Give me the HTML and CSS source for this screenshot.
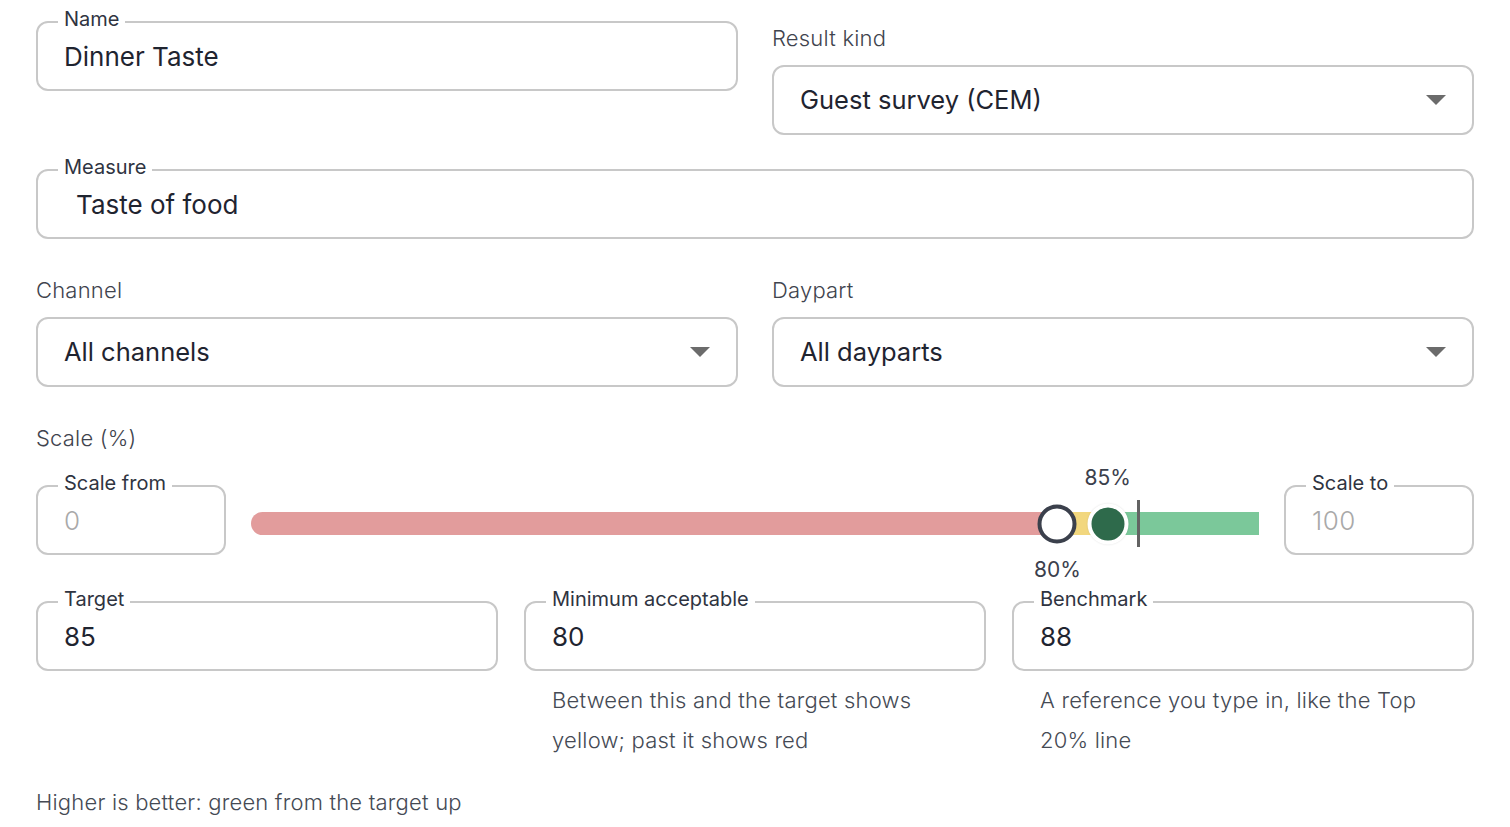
FILE: index.html
```html
<!DOCTYPE html>
<html lang="en">
<head>
<meta charset="utf-8">
<title>Dinner Taste</title>
<link rel="stylesheet" href="styles.css">
</head>
<body>
<main class="form">
  <div class="row two">
    <fieldset class="field">
      <legend>Name</legend>
      <div class="value">Dinner Taste</div>
    </fieldset>
    <div class="stack">
      <div class="label">Result kind</div>
      <div class="select">
        <span class="value">Guest survey (CEM)</span>
        <span class="caret"></span>
      </div>
    </div>
  </div>

  <fieldset class="field measure">
    <legend>Measure</legend>
    <div class="value indent">Taste of food</div>
  </fieldset>

  <div class="row two selects">
    <div class="stack">
      <div class="label">Channel</div>
      <div class="select">
        <span class="value">All channels</span>
        <span class="caret"></span>
      </div>
    </div>
    <div class="stack">
      <div class="label">Daypart</div>
      <div class="select">
        <span class="value">All dayparts</span>
        <span class="caret"></span>
      </div>
    </div>
  </div>

  <div class="label scale-title">Scale (%)</div>

  <div class="scale-row">
    <fieldset class="field small">
      <legend>Scale from</legend>
      <div class="value muted">0</div>
    </fieldset>

    <div class="slider">
      <div class="track">
        <span class="seg red" style="width:80%"></span>
        <span class="seg yellow" style="width:5%"></span>
        <span class="seg green" style="width:15%"></span>
      </div>
      <span class="bench" style="left:88%"></span>
      <span class="thumb min" style="left:80%"></span>
      <span class="thumb target" style="left:85%"></span>
      <span class="pct above" style="left:85%">85%</span>
      <span class="pct below" style="left:80%">80%</span>
    </div>

    <fieldset class="field small">
      <legend>Scale to</legend>
      <div class="value muted">100</div>
    </fieldset>
  </div>

  <div class="row three">
    <div class="col">
      <fieldset class="field">
        <legend>Target</legend>
        <div class="value">85</div>
      </fieldset>
    </div>
    <div class="col">
      <fieldset class="field">
        <legend>Minimum acceptable</legend>
        <div class="value">80</div>
      </fieldset>
      <p class="help">Between this and the target shows yellow; past it shows red</p>
    </div>
    <div class="col">
      <fieldset class="field">
        <legend>Benchmark</legend>
        <div class="value">88</div>
      </fieldset>
      <p class="help">A reference you type in, like the Top 20% line</p>
    </div>
  </div>

  <p class="footnote">Higher is better: green from the target up</p>
</main>
</body>
</html>
```

FILE: styles.css
```css
* { box-sizing: border-box; }

html, body {
  margin: 0;
  background: #ffffff;
}

body {
  font-family: "Inter", "Lato", "Liberation Sans", sans-serif;
  color: #1f2430;
}

.form {
  padding: 7px 36px 0 36px;
  display: flex;
  flex-direction: column;
}

.row.two {
  display: grid;
  grid-template-columns: 1fr 1fr;
  column-gap: 34px;
  align-items: start;
}

.row.three {
  display: grid;
  grid-template-columns: 1fr 1fr 1fr;
  column-gap: 26px;
  align-items: start;
  margin-top: 32px;
}

/* outlined field */
.field {
  margin: 0;
  min-width: 0;
  border: 2px solid #c8c8c8;
  border-radius: 12px;
  padding: 0 20px 13px 20px;
}

.field legend {
  padding: 0 6px 6px 6px;
  font-size: 20px;
  line-height: 24px;
  color: #2f3441;
}

.value {
  font-size: 26px;
  line-height: 39px;
  color: #1f2430;
  padding-left: 6px;
  white-space: nowrap;
}

.value.indent { padding-left: 18px; }

.value.muted {
  color: #a9a9a9;
  font-weight: 300;
  letter-spacing: 0.5px;
}

.measure { margin-top: 20px; }

.stack {
  display: flex;
  flex-direction: column;
}

.label {
  font-size: 22px;
  line-height: 28px;
  font-weight: 300;
  letter-spacing: 0.2px;
  color: #3f444e;
}

.stack .label {
  margin: 17px 0 13px 0;
}

.selects { margin-top: 20px; }

.select {
  height: 70px;
  border: 2px solid #c8c8c8;
  border-radius: 12px;
  display: flex;
  align-items: center;
  justify-content: space-between;
  padding: 0 26px 0 26px;
}

.select .value {
  padding-left: 0;
  line-height: 34px;
  font-size: 25.5px;
}

.caret {
  width: 0;
  height: 0;
  border-left: 10px solid transparent;
  border-right: 10px solid transparent;
  border-top: 10px solid #6b6b6b;
}

.scale-title {
  margin-top: 37px;
}

.scale-row {
  display: flex;
  gap: 25px;
  margin-top: 19px;
  align-items: stretch;
}

.field.small {
  flex: 0 0 190px;
}

.slider {
  flex: 1 1 auto;
  position: relative;
}

.track {
  display: flex;
  height: 23px;
  margin-top: 41px;
  border-radius: 12px 0 0 12px;
  overflow: hidden;
}

.seg { display: block; height: 100%; }
.seg.red { background: #e29c9c; }
.seg.yellow { background: #f2d77e; }
.seg.green { background: #7bc89a; }

.bench {
  position: absolute;
  top: 29px;
  width: 3px;
  height: 47px;
  margin-left: -1px;
  background: #636363;
}

.thumb {
  position: absolute;
  top: 52.5px;
  border-radius: 50%;
  transform: translate(-50%, -50%);
}

.thumb.min {
  width: 39px;
  height: 39px;
  background: #ffffff;
  border: 4px solid #3b404c;
}

.thumb.target {
  width: 41px;
  height: 41px;
  background: #2e6a4b;
  border: 4px solid #ffffff;
  box-shadow: 0 0 2px rgba(0,0,0,0.12);
}

.pct {
  position: absolute;
  transform: translateX(-50%);
  font-size: 21px;
  line-height: 26px;
  color: #3b404c;
  white-space: nowrap;
}

.pct.above { top: -6px; }
.pct.below { top: 86px; }

.col {
  display: flex;
  flex-direction: column;
  min-width: 0;
}

.help {
  margin: 9px 0 0 0;
  padding-left: 28px;
  padding-right: 20px;
  font-size: 22px;
  line-height: 40px;
  font-weight: 300;
  letter-spacing: 0.2px;
  color: #454a54;
}

.footnote {
  margin: 22px 0 0 0;
  font-size: 22px;
  line-height: 40px;
  font-weight: 300;
  letter-spacing: 0.2px;
  color: #454a54;
}
```
